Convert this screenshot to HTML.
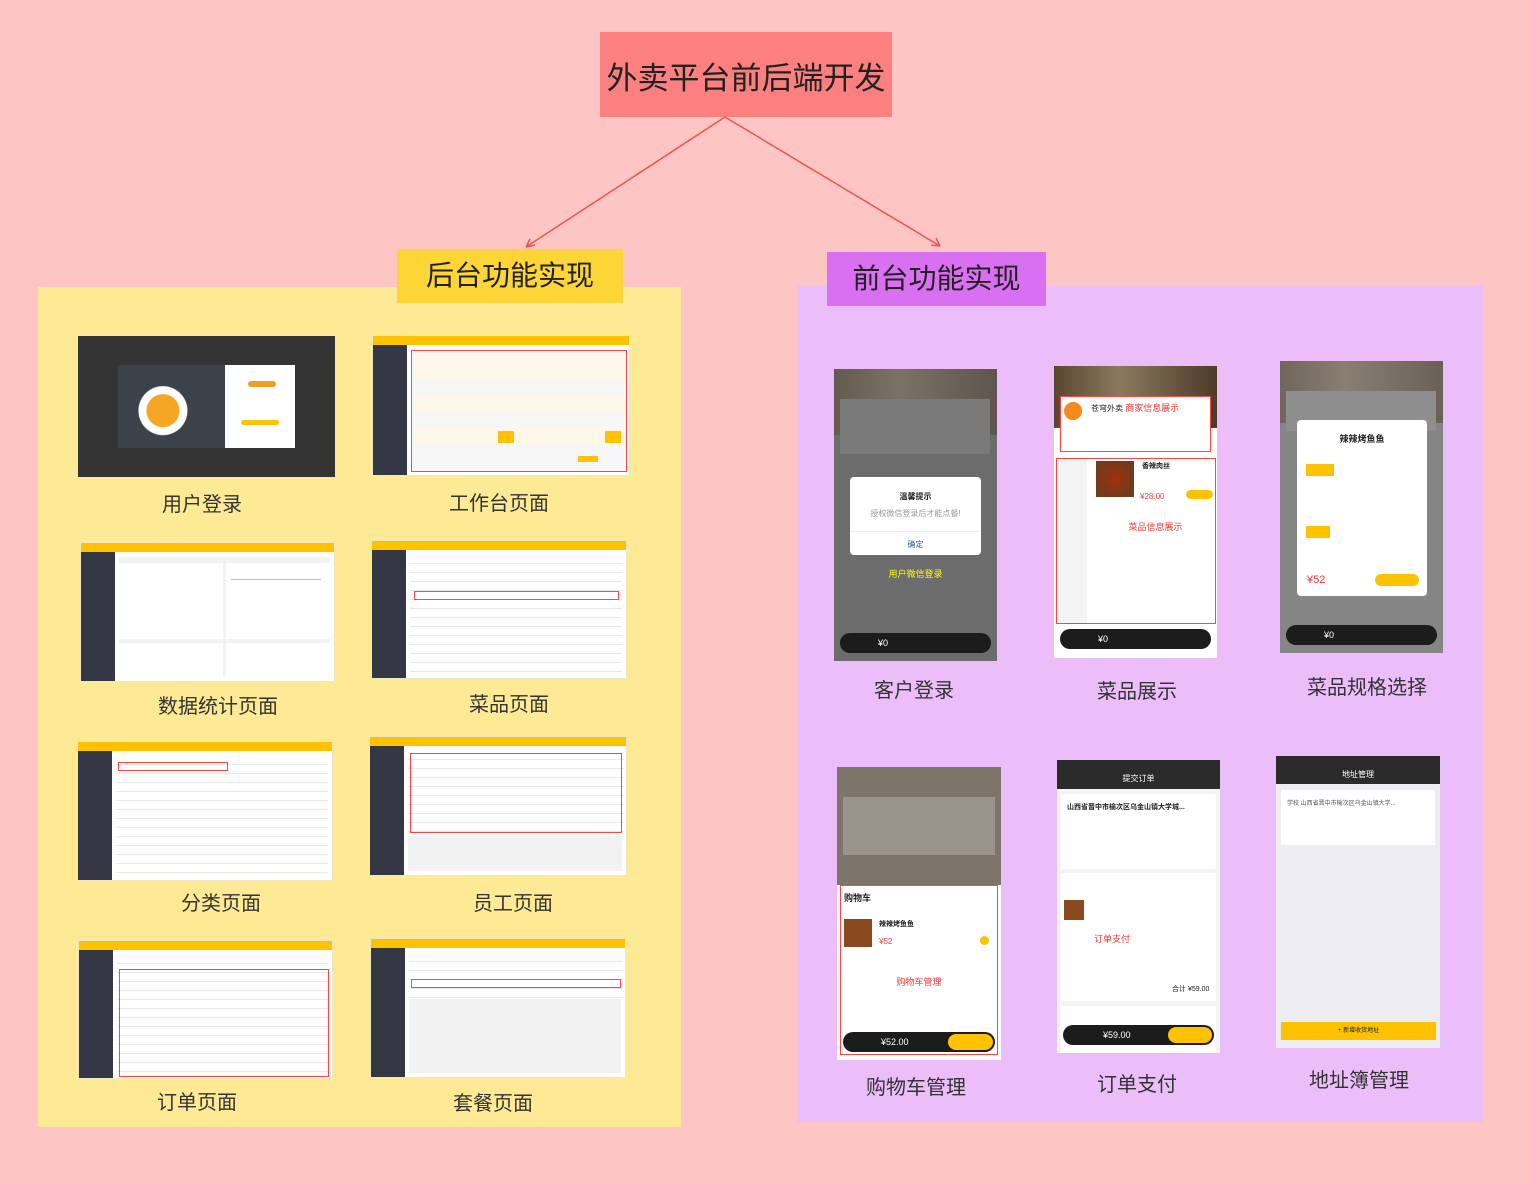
<!DOCTYPE html>
<html><head><meta charset="utf-8">
<style>
*{margin:0;padding:0;box-sizing:border-box}
body{width:1531px;height:1184px;background:#fec5c5;position:relative;overflow:hidden;font-family:"Liberation Sans","Noto Sans CJK SC",sans-serif;color:#222}
.a{position:absolute}
.lbl{position:absolute;font-size:20px;color:#333;transform:translateX(-50%);white-space:nowrap}
.bk{position:absolute;background:#fff;overflow:hidden;border:1px solid #f0e6c0}
.bk .hd{position:absolute;left:0;top:0;right:0;height:9px;background:#ffc200}
.bk .sd{position:absolute;left:0;top:9px;bottom:0;width:34px;background:#343744}
.bk .ct{position:absolute;left:38px;top:14px;right:4px;bottom:4px;background:repeating-linear-gradient(#fff 0 8px,#e8e8e8 8px 9px)}
.ph{position:absolute;overflow:hidden;background:#fff}
.ph .top{position:absolute;left:0;top:0;right:0;height:62px;background:linear-gradient(90deg,#5a4630,#8b7a5e 40%,#4d3b2a)}
.cart{position:absolute;left:6px;right:6px;height:20px;border-radius:10px;background:#1c1c1c;color:#fff;font-size:9px;line-height:20px;padding-left:38px}
.red{color:#f33}
.rbox{position:absolute;border:1px solid #f44}
</style></head><body>

<div class="a" style="left:600px;top:32px;width:292px;height:85px;background:#fd8080;font-size:31px;line-height:94px;text-align:center;color:#222">外卖平台前后端开发</div>
<svg class="a" style="left:0;top:0" width="1531" height="320">
<line x1="725" y1="117" x2="526" y2="247" stroke="#f05050" stroke-width="1.5"/>
<line x1="725" y1="117" x2="940" y2="246" stroke="#f05050" stroke-width="1.5"/>
<path d="M526 247 l4 -8 M526 247 l9 -2" stroke="#f05050" stroke-width="1.5" fill="none"/>
<path d="M940 246 l-9 -1 M940 246 l-4 -8" stroke="#f05050" stroke-width="1.5" fill="none"/>
</svg>

<div class="a" style="left:38px;top:287px;width:643px;height:840px;background:#feea94"></div>
<div class="a" style="left:397px;top:249px;width:226px;height:54px;background:#fdd536;font-size:28px;line-height:54px;text-align:center">后台功能实现</div>
<div class="a" style="left:797px;top:286px;width:686px;height:836px;background:#ebbefa"></div>
<div class="a" style="left:827px;top:252px;width:219px;height:54px;background:#d96ff1;font-size:28px;line-height:54px;text-align:center">前台功能实现</div>

<div class="a" style="left:78px;top:336px;width:257px;height:141px;background:#343434">
 <div class="a" style="left:40px;top:29px;width:107px;height:83px;background:radial-gradient(circle at 42% 55%,#f5a623 0 16px,#fff 17px 24px,#3c4249 25px)"></div>
 <div class="a" style="left:147px;top:29px;width:70px;height:83px;background:#fff">
  <div class="a" style="left:23px;top:16px;width:28px;height:6px;background:#f0a020;border-radius:3px"></div>
  <div class="a" style="left:16px;top:55px;width:38px;height:5px;background:#ffc200;border-radius:3px"></div>
 </div>
</div>

<div class="bk" style="left:372px;top:335px;width:258px;height:141px"><div class="hd"></div><div class="sd"></div><div class="ct" style="background:#f7f7f7"></div>
 <div class="a" style="left:42px;top:18px;width:210px;height:26px;background:#fff7e8"></div>
 <div class="a" style="left:42px;top:60px;width:210px;height:16px;background:#fff7e8"></div>
 <div class="a" style="left:42px;top:92px;width:210px;height:16px;background:#fff7e8"></div>
 <div class="a" style="left:125px;top:95px;width:16px;height:12px;background:#ffc200"></div>
 <div class="a" style="left:232px;top:95px;width:16px;height:12px;background:#ffc200"></div>
 <div class="a" style="left:205px;top:120px;width:20px;height:6px;background:#ffc200"></div>
 <div class="rbox" style="left:38px;top:14px;width:216px;height:122px"></div></div>
<div class="bk" style="left:80px;top:542px;width:255px;height:140px"><div class="hd"></div><div class="sd"></div><div class="ct" style="background:#f3f3f3"></div>
 <div class="a" style="left:38px;top:20px;width:104px;height:76px;background:#fff"></div>
 <div class="a" style="left:145px;top:20px;width:106px;height:76px;background:#fff"></div>
 <div class="a" style="left:150px;top:36px;width:90px;height:1px;background:#ffc200"></div>
 <div class="a" style="left:38px;top:100px;width:104px;height:36px;background:#fff"></div>
 <div class="a" style="left:145px;top:100px;width:106px;height:36px;background:#fff"></div></div>
<div class="bk" style="left:371px;top:540px;width:256px;height:139px"><div class="hd"></div><div class="sd"></div><div class="ct"></div><div class="rbox" style="left:42px;top:50px;width:205px;height:9px"></div></div>
<div class="bk" style="left:77px;top:741px;width:256px;height:140px"><div class="hd"></div><div class="sd"></div><div class="ct"></div><div class="rbox" style="left:40px;top:20px;width:110px;height:9px"></div></div>
<div class="bk" style="left:369px;top:736px;width:258px;height:140px"><div class="hd"></div><div class="sd"></div><div class="ct" style="background:#f2f2f2"></div><div class="a" style="left:38px;top:14px;width:216px;height:85px;background:repeating-linear-gradient(#fff 0 8px,#e8e8e8 8px 9px)"></div><div class="rbox" style="left:40px;top:16px;width:212px;height:80px"></div></div>
<div class="bk" style="left:78px;top:940px;width:255px;height:139px"><div class="hd"></div><div class="sd"></div><div class="ct"></div><div class="rbox" style="left:40px;top:28px;width:210px;height:108px"></div></div>
<div class="bk" style="left:370px;top:938px;width:256px;height:140px"><div class="hd"></div><div class="sd"></div><div class="ct" style="background:#f2f2f2"></div><div class="a" style="left:38px;top:14px;width:214px;height:46px;background:repeating-linear-gradient(#fff 0 8px,#e8e8e8 8px 9px)"></div><div class="rbox" style="left:40px;top:40px;width:210px;height:9px"></div></div>

<div class="lbl" style="left:202px;top:488px">用户登录</div>
<div class="lbl" style="left:499px;top:487px">工作台页面</div>
<div class="lbl" style="left:218px;top:690px">数据统计页面</div>
<div class="lbl" style="left:509px;top:688px">菜品页面</div>
<div class="lbl" style="left:221px;top:887px">分类页面</div>
<div class="lbl" style="left:513px;top:887px">员工页面</div>
<div class="lbl" style="left:197px;top:1086px">订单页面</div>
<div class="lbl" style="left:493px;top:1087px">套餐页面</div>

<div class="ph" style="left:834px;top:369px;width:163px;height:292px;background:#6c6c6c">
 <div class="top" style="height:66px;opacity:.45"></div>
 <div class="a" style="left:6px;top:30px;width:150px;height:55px;background:#7a7a7a"></div>
 <div class="a" style="left:16px;top:108px;width:131px;height:78px;background:#fff;border-radius:4px;text-align:center;font-size:8px">
  <div style="margin-top:14px;font-weight:bold">温馨提示</div><div style="color:#999;margin-top:6px">授权微信登录后才能点餐!</div>
  <div style="border-top:1px solid #eee;margin-top:12px;padding-top:7px;color:#3a5a9a">确定</div></div>
 <div class="a" style="left:0;top:198px;width:163px;text-align:center;font-size:9px;color:#ff0">用户微信登录</div>
 <div class="cart" style="top:264px">¥0</div>
</div>
<div class="ph" style="left:1054px;top:366px;width:163px;height:292px">
 <div class="top"></div>
 <div class="a" style="left:6px;top:30px;width:151px;height:56px;background:#fff;border:1px solid #f44;font-size:8px;padding:4px 0 0 30px">苍穹外卖 <span class="red" style="font-size:9px">商家信息展示</span></div>
 <div class="a" style="left:10px;top:36px;width:18px;height:18px;border-radius:50%;background:#f38a1a"></div>
 <div class="a" style="left:2px;top:92px;width:160px;height:166px;border:1px solid #f44"></div>
 <div class="a" style="left:3px;top:93px;width:30px;height:164px;background:#f4f4f4"></div>
 <div class="a" style="left:42px;top:95px;width:38px;height:36px;background:radial-gradient(#a03010,#604020)"></div>
 <div class="a" style="left:88px;top:95px;font-size:7px;font-weight:bold">香辣肉丝</div>
 <div class="a red" style="left:86px;top:126px;font-size:8px">¥28.00</div>
 <div class="a" style="left:132px;top:124px;width:27px;height:9px;border-radius:5px;background:#ffc200"></div>
 <div class="a red" style="left:0;top:154px;width:203px;text-align:center;font-size:9px">菜品信息展示</div>
 <div class="cart" style="top:263px">¥0</div>
</div>
<div class="ph" style="left:1280px;top:361px;width:163px;height:292px;background:#858585">
 <div class="top" style="opacity:.5"></div>
 <div class="a" style="left:6px;top:30px;width:150px;height:40px;background:#8e8e8e"></div>
 <div class="a" style="left:17px;top:59px;width:130px;height:176px;background:#fff;border-radius:4px">
  <div style="text-align:center;font-size:9px;font-weight:bold;margin-top:12px">辣辣烤鱼鱼</div>
  <div class="a" style="left:9px;top:44px;width:28px;height:12px;background:#ffc200"></div>
  <div class="a" style="left:9px;top:106px;width:24px;height:12px;background:#ffc200"></div>
  <div class="a red" style="left:10px;top:154px;font-size:11px">¥52</div>
  <div class="a" style="left:78px;top:154px;width:44px;height:12px;border-radius:6px;background:#ffc200"></div>
 </div>
 <div class="cart" style="top:264px">¥0</div>
</div>
<div class="ph" style="left:837px;top:767px;width:164px;height:293px">
 <div class="a" style="left:0;top:0;width:164px;height:118px;background:#7d7569"></div>
 <div class="a" style="left:6px;top:30px;width:152px;height:58px;background:#9a948c"></div>
 <div class="rbox" style="left:3px;top:118px;width:158px;height:170px"></div>
 <div class="a" style="left:7px;top:124px;font-size:9px;font-weight:bold">购物车</div>
 <div class="a" style="left:7px;top:152px;width:28px;height:28px;background:#8a4a20"></div>
 <div class="a" style="left:42px;top:152px;font-size:7px;font-weight:bold">辣辣烤鱼鱼</div>
 <div class="a red" style="left:42px;top:170px;font-size:8px">¥52</div>
 <div class="a" style="left:143px;top:169px;width:9px;height:9px;border-radius:50%;background:#ffc200"></div>
 <div class="a red" style="left:0;top:208px;width:164px;text-align:center;font-size:9px">购物车管理</div>
 <div class="cart" style="top:265px;right:6px">¥52.00<span class="a" style="right:2px;top:2px;width:45px;height:16px;border-radius:8px;background:#ffc200"></span></div>
</div>
<div class="ph" style="left:1057px;top:760px;width:163px;height:293px;background:#f4f4f4">
 <div class="a" style="left:0;top:0;width:163px;height:29px;background:#2b2b2b;color:#fff;font-size:8px;text-align:center;line-height:38px">提交订单</div>
 <div class="a" style="left:4px;top:34px;width:155px;height:75px;background:#fff;font-size:7px;padding:8px 6px;font-weight:bold">山西省晋中市榆次区乌金山镇大学城...</div>
 <div class="a" style="left:4px;top:113px;width:155px;height:128px;background:#fff"></div>
 <div class="a" style="left:7px;top:140px;width:20px;height:20px;background:#8a4a20"></div>
 <div class="a red" style="left:0;top:172px;width:110px;text-align:center;font-size:9px">订单支付</div>
 <div class="a" style="left:115px;top:224px;font-size:7px">合计 ¥59.00</div>
 <div class="a" style="left:4px;top:246px;width:155px;height:47px;background:#fff"></div>
 <div class="cart" style="top:265px;padding-left:40px">¥59.00<span class="a" style="right:2px;top:2px;width:44px;height:16px;border-radius:8px;background:#ffc200"></span></div>
</div>
<div class="ph" style="left:1276px;top:756px;width:164px;height:292px;background:#eeedf2">
 <div class="a" style="left:0;top:0;width:164px;height:28px;background:#2b2b2b;color:#fff;font-size:8px;text-align:center;line-height:38px">地址管理</div>
 <div class="a" style="left:5px;top:34px;width:154px;height:55px;background:#fff;font-size:6px;padding:8px 6px;color:#555">学校 山西省晋中市榆次区乌金山镇大学...</div>
 <div class="a" style="left:5px;top:266px;width:155px;height:18px;background:#ffc200;font-size:6px;text-align:center;line-height:18px">+ 新增收货地址</div>
</div>

<div class="lbl" style="left:914px;top:674px">客户登录</div>
<div class="lbl" style="left:1137px;top:675px">菜品展示</div>
<div class="lbl" style="left:1367px;top:671px">菜品规格选择</div>
<div class="lbl" style="left:916px;top:1071px">购物车管理</div>
<div class="lbl" style="left:1137px;top:1068px">订单支付</div>
<div class="lbl" style="left:1359px;top:1064px">地址簿管理</div>
</body></html>
